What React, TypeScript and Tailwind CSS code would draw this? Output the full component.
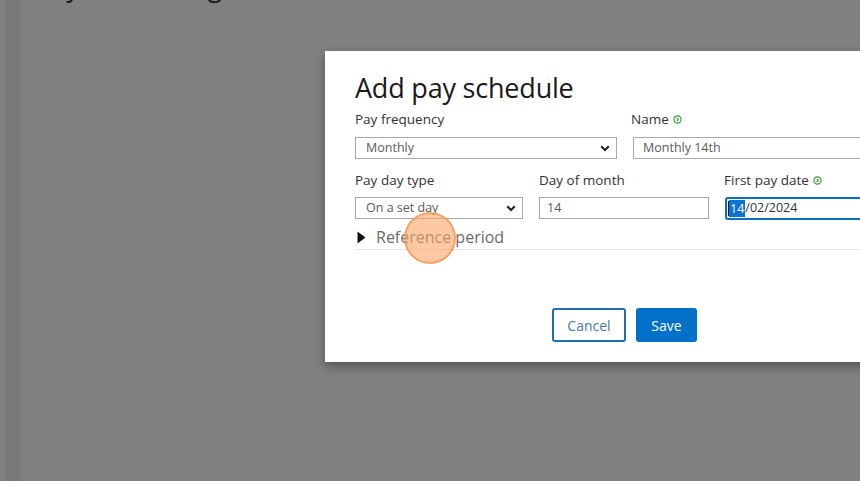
import React from "react";

function HelpDot() {
  return (
    <svg width="9" height="9" viewBox="0 0 10 10" className="inline-block ml-[4px] -mt-[2px]">
      <circle cx="5" cy="5" r="4" fill="none" stroke="#3c9a3c" strokeWidth="1.3" />
      <path d="M4 3.2 L6 5 L4 6.8" fill="none" stroke="#3c9a3c" strokeWidth="1.2" />
    </svg>
  );
}

function Chevron() {
  return (
    <svg width="10" height="7" viewBox="0 0 10 7" className="shrink-0">
      <path d="M1.2 1.2 L5 5 L8.8 1.2" fill="none" stroke="#222" strokeWidth="2" />
    </svg>
  );
}

function FakeSelect({ value, width }: { value: string; width: string }) {
  return (
    <div
      className={`${width} h-[22px] border border-[#a9a9a9] bg-white flex items-center justify-between pl-[10px] pr-[6px] text-[12.5px] text-[#5a5a5a]`}
    >
      <span>{value}</span>
      <Chevron />
    </div>
  );
}

export default function App() {
  return (
    <div
      className="relative w-[860px] h-[481px] overflow-hidden bg-[#808080] flex"
      style={{ fontFamily: '"Open Sans", "Noto Sans", sans-serif' }}
    >
      <div className="w-[6px] bg-[#808080]" />
      <div className="w-[14px] bg-[#787878]" />
      <div className="flex-1 pl-[15px]">
        <h1 className="text-[27px] leading-[30px] text-[#1a1a1a] -mt-[29px]">Pay scheduling</h1>
      </div>

      <div className="absolute left-[325px] top-[51px] w-[600px] h-[311px] bg-white shadow-[0_4px_10px_rgba(0,0,0,0.35)] pl-[30px] pt-[19px]">
        <h2 className="text-[27px] leading-[36px] text-[#1a1a1a] tracking-[-0.2px]">Add pay schedule</h2>

        <div className="flex gap-[16px] mt-[4px]">
          <div className="flex flex-col">
            <label className="text-[13.5px] leading-[18px] text-[#333] mb-[9px]">Pay frequency</label>
            <FakeSelect value="Monthly" width="w-[262px]" />
          </div>
          <div className="flex flex-col">
            <label className="text-[13.5px] leading-[18px] text-[#333] mb-[9px] -ml-[2px]">
              Name
              <HelpDot />
            </label>
            <div className="w-[260px] h-[22px] border border-[#a9a9a9] flex items-center pl-[9px] text-[12.5px] text-[#5a5a5a]">
              Monthly 14th
            </div>
          </div>
        </div>

        <div className="flex gap-[16px] mt-[12px]">
          <div className="flex flex-col">
            <label className="text-[13.5px] leading-[18px] text-[#333] mb-[8px]">Pay day type</label>
            <FakeSelect value="On a set day" width="w-[168px]" />
          </div>
          <div className="flex flex-col">
            <label className="text-[13.5px] leading-[18px] text-[#333] mb-[8px]">Day of month</label>
            <div className="w-[170px] h-[22px] border border-[#a9a9a9] flex items-center pl-[7px] text-[12.5px] text-[#5a5a5a]">
              14
            </div>
          </div>
          <div className="flex flex-col">
            <label className="text-[13.5px] leading-[18px] text-[#333] mb-[8px] -ml-[1px]">
              First pay date
              <HelpDot />
            </label>
            <div className="w-[200px] h-[23px] border-2 border-[#0a6fc2] rounded-[3px] flex items-center pl-[1px] text-[12.5px] text-[#333]">
              <span className="w-[1px] h-[15px] bg-[#111]" />
              <span className="bg-[#0a74d6] text-white px-[1px] leading-[17px]">14</span>
              <span>/02/2024</span>
            </div>
          </div>
        </div>

        <div className="flex items-center gap-[10px] mt-[7px] pl-[2px] h-[20px]">
          <svg width="9" height="13" viewBox="0 0 9 13">
            <path d="M0.5 0.5 L8.5 6.5 L0.5 12.5 Z" fill="#111" />
          </svg>
          <span className="text-[16px] text-[#6a6a6a]">Reference period</span>
        </div>
        <div className="h-px bg-[#e6e6e6] mt-[2px]" />

        <div className="flex gap-[10px] mt-[58px] pl-[197px]">
          <button className="w-[74px] h-[34px] rounded-[3px] border-2 border-[#1f6fb0] bg-white text-[14px] text-[#4a7aa6]">
            Cancel
          </button>
          <button className="w-[61px] h-[34px] rounded-[3px] bg-[#0070c9] text-[14px] text-white">
            Save
          </button>
        </div>
      </div>

      <div className="absolute left-[404px] top-[212px] w-[52px] h-[52px] rounded-full bg-[rgba(252,165,100,0.6)] border-2 border-[rgba(240,150,80,0.7)]" />
    </div>
  );
}
